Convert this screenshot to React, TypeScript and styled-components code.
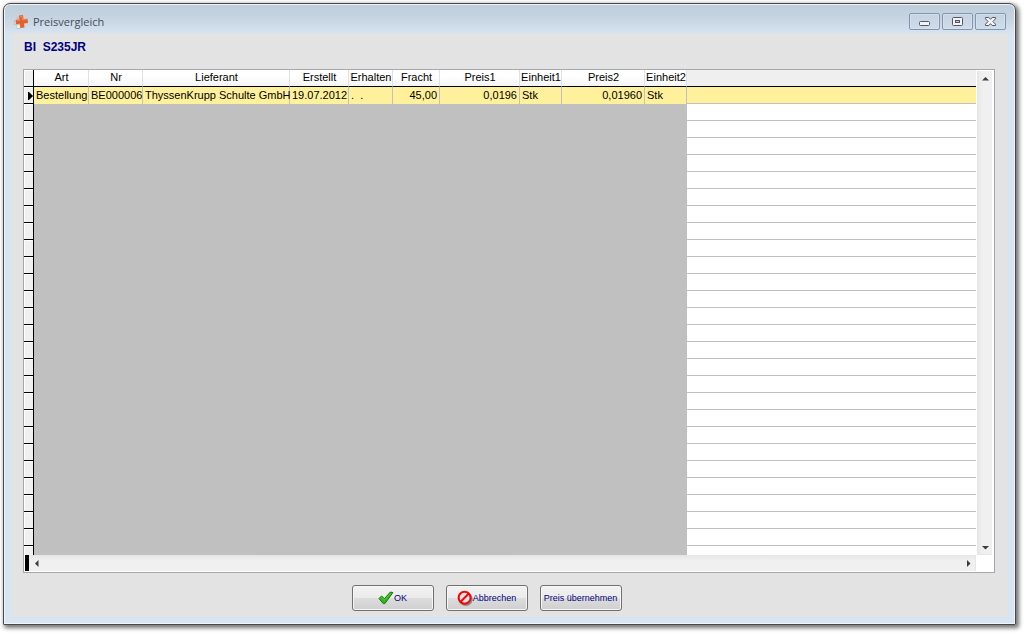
import React from "react";
import styled, { createGlobalStyle, css } from "styled-components";

const GlobalStyle = createGlobalStyle`
  *, *::before, *::after { box-sizing: border-box; }
  body {
    margin: 0;
    background: #fff;
    color: #000;
    font-family: "Liberation Sans", Arial, sans-serif;
    font-size: 11px;
  }
`;

const Desktop = styled.div`
  display: flex;
  height: 100vh;
  padding: 3px 8px 8px 3px;
`;

const Window = styled.main`
  flex: 1;
  min-width: 0;
  display: flex;
  flex-direction: column;
  padding: 0 6px 6px;
  border: 1px solid #45484c;
  border-radius: 7px 7px 1px 1px;
  background: linear-gradient(#bfcddb 0, #c6d4e2 14px, #d7e4f1 30px);
  box-shadow: inset 0 0 0 1px #eef4fa, 2px 2px 4px 1px rgba(0, 0, 0, 0.55);
`;

const TitleBar = styled.header`
  display: flex;
  align-items: center;
  gap: 4px;
  height: 29px;
  padding: 6px 3px 0 4px;
`;

const Title = styled.h1`
  flex: 1;
  margin: 0;
  font: 400 11px/16px "Open Sans", "Segoe UI", sans-serif;
  color: #444d58;
`;

const WindowButtons = styled.div`
  display: flex;
  gap: 2px;
`;

const WindowButton = styled.button`
  display: flex;
  align-items: center;
  justify-content: center;
  width: 31px;
  height: 17px;
  padding: 0;
  border: 1px solid #8495ab;
  border-radius: 2px;
  background: linear-gradient(#c5d2e1, #cfdcea);
  box-shadow: inset 0 0 0 1px #d4e0ed;
`;

const Content = styled.div`
  flex: 1;
  min-height: 0;
  display: flex;
  flex-direction: column;
  padding: 6px 13px 6px 12px;
  margin: 0 1px 1px;
  background: #e3e3e3;
`;

const Heading = styled.h2`
  margin: 0 0 14px 1px;
  font-size: 12px;
  line-height: 16px;
  font-weight: 700;
  color: #000080;
`;

const Grid = styled.section`
  flex: 1;
  min-height: 0;
  display: grid;
  grid-template: minmax(0, 1fr) 17px / minmax(0, 1fr) 18px;
  border: 1px solid #a6a6ae;
  background: #fff;
`;

const TableViewport = styled.div`
  overflow: hidden;
`;

const Table = styled.table`
  width: 100%;
  table-layout: fixed;
  border-collapse: separate;
  border-spacing: 0;
  white-space: nowrap;
`;

const HeaderCell = styled.th`
  height: 17px;
  padding: 0 0 2px 1px;
  border-right: 1px solid #dfe1e4;
  border-bottom: 1px solid #000;
  background: linear-gradient(#fff 6px, #f3f4f6);
  font-weight: 400;
  line-height: 14px;
  text-align: center;
`;

const HeaderRest = styled.td`
  padding: 0;
  border-bottom: 1px solid #000;
  background: #efefef;
`;

const Indicator = styled.td`
  height: 17px;
  padding: 2px 0 0;
  border-right: 1px solid #000;
  border-bottom: 1px solid #000;
  background: #f0f0f0;
  box-shadow: inset 1px 1px 0 #fff;
  line-height: 0;
  text-align: right;
`;

const Cell = styled.td<{ $right?: boolean }>`
  height: 17px;
  padding: 0 0 1px 2px;
  border-right: 1px solid #c0c0c0;
  background: #fff09b;
  line-height: 16px;
  ${(p) =>
    p.$right &&
    css`
      padding-right: 2px;
      text-align: right;
    `}
`;

const SelectedRest = styled.td`
  padding: 0;
  border-bottom: 1px solid #c0c0c0;
  background: #fff09b;
`;

const EmptyArea = styled.td`
  padding: 0;
  background: #c0c0c0;
`;

const EmptyRest = styled.td`
  padding: 0;
  border-bottom: 1px solid #c0c0c0;
  background: #fff;
`;

const VerticalBar = styled.div`
  display: flex;
  flex-direction: column;
  justify-content: space-between;
  align-items: center;
  margin: 1px 2px 0 1px;
  padding: 4px 0 3px;
  border: solid #e6e6e6;
  border-width: 0 0 1px 1px;
  background: linear-gradient(90deg, #e8e8e8, #f0f0f0 5px);
`;

const BottomStrip = styled.div`
  display: flex;
  padding: 0 0 1px 1px;
`;

const Splitter = styled.div`
  width: 4px;
  background: #000;
`;

const HorizontalBar = styled.div`
  flex: 1;
  display: flex;
  justify-content: space-between;
  align-items: center;
  padding: 0 3px 0 4px;
  border: solid #e6e6e6;
  border-width: 1px 1px 0 0;
  background: linear-gradient(#e8e8e8, #f0f0f0 5px);
`;

const ArrowButton = styled.button`
  display: flex;
  padding: 0;
  border: 0;
  background: none;
`;

const Actions = styled.div`
  display: flex;
  justify-content: center;
  gap: 12px;
  padding: 12px 45px 0 0;
`;

const ActionButton = styled.button`
  display: flex;
  align-items: center;
  justify-content: center;
  width: 82px;
  height: 26px;
  padding: 0;
  border: 1px solid #707070;
  border-radius: 3px;
  background: linear-gradient(#f2f2f2, #ebebeb 50%, #dddddd 50%, #cfcfcf);
  box-shadow: inset 0 0 0 1px #f7f7f7;
  color: #000080;
  font: 9px/12px "Liberation Sans", Arial, sans-serif;
  white-space: nowrap;
`;

const columns = [
  { name: "Art", width: 55, value: "Bestellung" },
  { name: "Nr", width: 54, value: "BE000006" },
  { name: "Lieferant", width: 147, value: "ThyssenKrupp Schulte GmbH" },
  { name: "Erstellt", width: 59, value: "19.07.2012" },
  { name: "Erhalten", width: 44, value: ".\u00a0\u00a0." },
  { name: "Fracht", width: 47, value: "45,00", right: true },
  { name: "Preis1", width: 80, value: "0,0196", right: true },
  { name: "Einheit1", width: 42, value: "Stk" },
  { name: "Preis2", width: 83, value: "0,01960", right: true },
  { name: "Einheit2", width: 42, value: "Stk" },
];

const emptyRows = Array.from({ length: 60 }, (_, i) => i);

const AppIcon = () => (
  <svg width="15" height="16" viewBox="0 0 15 16" aria-hidden="true">
    <path d="M2.5 2.5h4v3.500h3v5h-3v4h-4v-4h-2.500v-5h2.500z" fill="#c2c5c8" />
    <path d="M1 6h3v4h-3zM3 11h3v3h-3z" fill="#e9ecef" />
    <path d="M5 1.500l4-.5.500 4 4-.3.500 4.300-4 .5.500 4-4.200.5-.4-4.200-4 .4-.4-4.200 4-.4z" fill="#e7602b" />
    <path d="M6 2.500l2-.2.500 3.500 4-.3M3 6.500l3-.3" fill="none" stroke="#f08a58" />
  </svg>
);

const MinimizeIcon = () => (
  <svg width="13" height="11" viewBox="0 0 13 11" aria-hidden="true">
    <rect x="1.5" y="5.5" width="10" height="4" rx="1" fill="#f4f4f4" stroke="#535666" />
  </svg>
);

const MaximizeIcon = () => (
  <svg width="13" height="11" viewBox="0 0 13 11" aria-hidden="true">
    <rect x="1.5" y="1.5" width="10" height="8" rx="1" fill="#f4f4f4" stroke="#535666" />
    <rect x="4.5" y="4.5" width="4" height="2" fill="#b9c8d8" stroke="#535666" />
  </svg>
);

const CloseIcon = () => (
  <svg width="13" height="11" viewBox="0 0 13 11" aria-hidden="true">
    <path
      d="M1.5 1.5h3.3l1.7 1.8 1.7-1.8h3.3v1.3L8.9 5.5l2.6 2.7v1.3H8.2L6.5 7.7 4.8 9.5H1.5V8.2l2.6-2.7-2.6-2.7z"
      fill="#f4f4f4"
      stroke="#535666"
    />
  </svg>
);

const arrowPaths = {
  up: "M0 5.5L3.5 2 7 5.5z",
  down: "M0 2L3.5 5.5 7 2z",
  left: "M5.5 0L2 3.5 5.5 7z",
  right: "M2 0L5.5 3.5 2 7z",
};

const Arrow = ({ dir }: { dir: keyof typeof arrowPaths }) => (
  <svg width="7" height="7" viewBox="0 0 7 7" aria-hidden="true">
    <path d={arrowPaths[dir]} fill="#3c3c3c" />
  </svg>
);

const RowMarker = () => (
  <svg width="6" height="8" viewBox="0 0 6 8" aria-hidden="true">
    <path d="M1 0h1l4 4-4 4H1z" fill="#000" />
  </svg>
);

const CheckIcon = () => (
  <svg width="16" height="14" viewBox="0 0 16 14" aria-hidden="true">
    <path d="M1 7.5L3.5 5l3 2.6L12.3 1l2.6.6-8 11H5.2z" fill="#2fb51c" stroke="#15780e" strokeLinejoin="round" />
    <path d="M2.6 7.2l1-.9 3 2.7 6-7" fill="none" stroke="#5cc93f" />
  </svg>
);

const ForbiddenIcon = () => (
  <svg width="16" height="16" viewBox="0 0 16 16" aria-hidden="true">
    <g fill="none" strokeWidth="2">
      <g stroke="#8a8a8a">
        <circle cx="8.9" cy="9.2" r="5.8" />
        <path d="M5 13l8-8" />
      </g>
      <circle cx="7.6" cy="7.8" r="5" fill="#e6e6e6" />
      <g stroke="#f50505">
        <circle cx="7.6" cy="7.8" r="6" />
        <path d="M3.6 11.8l8-8" />
      </g>
    </g>
  </svg>
);

export default function App() {
  return (
    <Desktop>
      <GlobalStyle />
      <Window>
        <TitleBar>
          <AppIcon />
          <Title>Preisvergleich</Title>
          <WindowButtons>
            <WindowButton type="button" aria-label="Minimieren"><MinimizeIcon /></WindowButton>
            <WindowButton type="button" aria-label="Maximieren"><MaximizeIcon /></WindowButton>
            <WindowButton type="button" aria-label="Schließen"><CloseIcon /></WindowButton>
          </WindowButtons>
        </TitleBar>
        <Content>
          <Heading>BI&nbsp; S235JR</Heading>
          <Grid>
            <TableViewport>
              <Table>
                <colgroup>
                  <col width={10} />
                  {columns.map((c) => <col key={c.name} width={c.width} />)}
                  <col />
                </colgroup>
                <thead>
                  <tr>
                    <Indicator />
                    {columns.map((c) => <HeaderCell key={c.name} scope="col">{c.name}</HeaderCell>)}
                    <HeaderRest />
                  </tr>
                </thead>
                <tbody>
                  <tr>
                    <Indicator><RowMarker /></Indicator>
                    {columns.map((c) => <Cell key={c.name} $right={c.right}>{c.value}</Cell>)}
                    <SelectedRest />
                  </tr>
                  {emptyRows.map((i) => (
                    <tr key={i} aria-hidden="true">
                      <Indicator />
                      <EmptyArea colSpan={columns.length} />
                      <EmptyRest />
                    </tr>
                  ))}
                </tbody>
              </Table>
            </TableViewport>
            <VerticalBar>
              <ArrowButton type="button" aria-label="Nach oben"><Arrow dir="up" /></ArrowButton>
              <ArrowButton type="button" aria-label="Nach unten"><Arrow dir="down" /></ArrowButton>
            </VerticalBar>
            <BottomStrip>
              <Splitter />
              <HorizontalBar>
                <ArrowButton type="button" aria-label="Nach links"><Arrow dir="left" /></ArrowButton>
                <ArrowButton type="button" aria-label="Nach rechts"><Arrow dir="right" /></ArrowButton>
              </HorizontalBar>
            </BottomStrip>
          </Grid>
          <Actions>
            <ActionButton type="button"><CheckIcon />OK</ActionButton>
            <ActionButton type="button"><ForbiddenIcon />Abbrechen</ActionButton>
            <ActionButton type="button">Preis übernehmen</ActionButton>
          </Actions>
        </Content>
      </Window>
    </Desktop>
  );
}
